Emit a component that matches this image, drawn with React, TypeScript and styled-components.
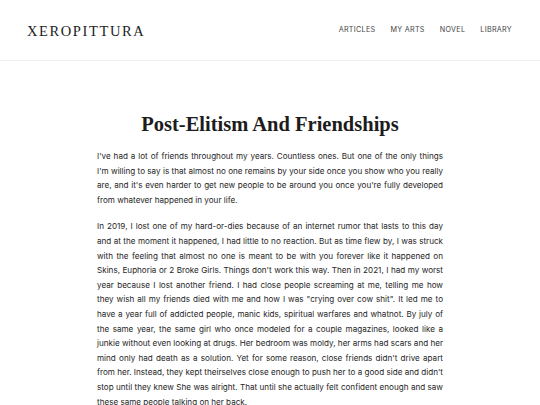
import React from 'react';
import styled, { createGlobalStyle } from 'styled-components';

const GlobalStyle = createGlobalStyle`
  html, body {
    margin: 0;
    padding: 0;
    background: #ffffff;
  }
  * {
    box-sizing: border-box;
  }
`;

const Page = styled.div`
  width: 100%;
  min-height: 405px;
  background: #ffffff;
`;

const Header = styled.header`
  height: 61px;
  display: flex;
  align-items: center;
  justify-content: space-between;
  padding: 0 28px 0 27px;
  border-bottom: 1px solid #f1f1f1;
`;

const Logo = styled.div`
  font-family: "Liberation Serif", "DejaVu Serif", serif;
  font-size: 14.5px;
  letter-spacing: 1.6px;
  color: #222222;
  margin-top: 2px;
`;

const Nav = styled.nav`
  display: flex;
  gap: 15px;
  margin-top: -1px;
`;

const NavLink = styled.a`
  font-family: Inter, "Noto Sans", sans-serif;
  font-size: 7.2px;
  letter-spacing: 0.3px;
  color: #444444;
  text-decoration: none;
`;

const Article = styled.main`
  width: 346px;
  margin: 0 auto;
  padding-top: 48px;
`;

const Title = styled.h1`
  font-family: "Liberation Serif", "DejaVu Serif", serif;
  font-weight: 700;
  font-size: 20.5px;
  color: #1c1c1c;
  text-align: center;
  margin: 0 0 10px;
  line-height: 30px;
  white-space: nowrap;
`;

const Paragraph = styled.p`
  font-family: Inter, "Noto Sans", sans-serif;
  font-size: 8.1px;
  line-height: 14.6px;
  color: #262626;
  text-align: justify;
  margin: 0 0 12px;
`;

const links = ['ARTICLES', 'MY ARTS', 'NOVEL', 'LIBRARY'];

const paragraphs = [
  "I've had a lot of friends throughout my years. Countless ones. But one of the only things I'm willing to say is that almost no one remains by your side once you show who you really are, and it's even harder to get new people to be around you once you're fully developed from whatever happened in your life.",
  "In 2019, I lost one of my hard-or-dies because of an internet rumor that lasts to this day and at the moment it happened, I had little to no reaction. But as time flew by, I was struck with the feeling that almost no one is meant to be with you forever like it happened on Skins, Euphoria or 2 Broke Girls. Things don't work this way. Then in 2021, I had my worst year because I lost another friend. I had close people screaming at me, telling me how they wish all my friends died with me and how I was \"crying over cow shit\". It led me to have a year full of addicted people, manic kids, spiritual warfares and whatnot. By july of the same year, the same girl who once modeled for a couple magazines, looked like a junkie without even looking at drugs. Her bedroom was moldy, her arms had scars and her mind only had death as a solution. Yet for some reason, close friends didn't drive apart from her. Instead, they kept theirselves close enough to push her to a good side and didn't stop until they knew She was alright. That until she actually felt confident enough and saw these same people talking on her back.",
];

export default function App() {
  return (
    <Page>
      <GlobalStyle />
      <Header>
        <Logo>XEROPITTURA</Logo>
        <Nav>
          {links.map((link) => (
            <NavLink key={link} href="#">{link}</NavLink>
          ))}
        </Nav>
      </Header>
      <Article>
        <Title>Post-Elitism And Friendships</Title>
        {paragraphs.map((text, i) => (
          <Paragraph key={i}>{text}</Paragraph>
        ))}
      </Article>
    </Page>
  );
}
